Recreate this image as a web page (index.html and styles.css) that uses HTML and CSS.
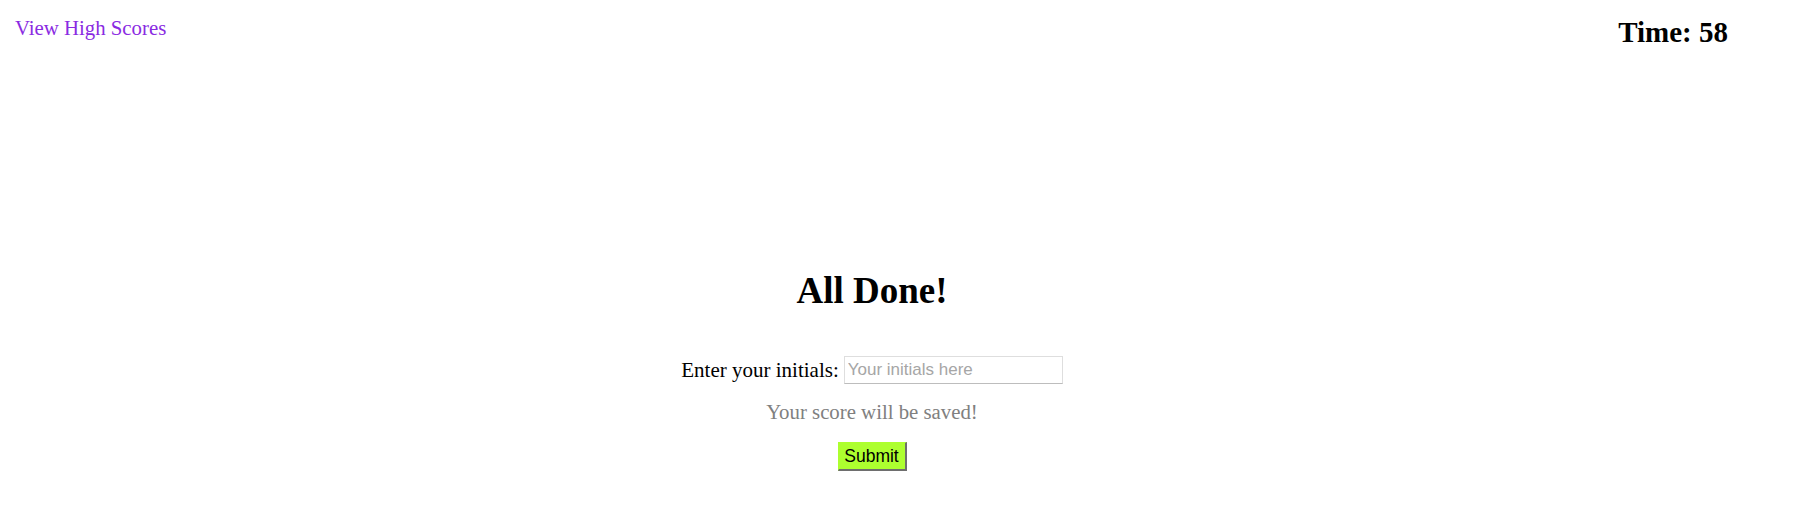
FILE: index.html
```html
<!DOCTYPE html>
<html lang="en">
<head>
<meta charset="utf-8">
<title>Quiz</title>
<link rel="stylesheet" href="styles.css">
</head>
<body>
<header class="top-bar">
  <a class="scores-link" href="#">View High Scores</a>
  <h2 class="timer">Time: 58</h2>
</header>
<main class="done">
  <h1 class="done-title">All Done!</h1>
  <div class="initials-row">
    <label class="initials-label" for="initials">Enter your initials:</label>
    <input class="initials-input" id="initials" type="text" placeholder="Your initials here">
  </div>
  <p class="save-note">Your score will be saved!</p>
  <button class="submit-btn" type="button">Submit</button>
</main>
</body>
</html>
```

FILE: styles.css
```css
html, body {
  margin: 0;
  padding: 0;
  background: #ffffff;
}

body {
  font-family: "Liberation Serif", "Times New Roman", serif;
  color: #000000;
}

.top-bar {
  display: flex;
  justify-content: space-between;
  align-items: flex-start;
  padding: 16px 85px 0 15px;
}

.scores-link {
  font-size: 20.8px;
  line-height: 24px;
  color: #8a2be2;
  text-decoration: none;
}

.timer {
  margin: 1px 0 0;
  font-size: 29px;
  line-height: 31px;
  font-weight: bold;
}

.done {
  display: flex;
  flex-direction: column;
  align-items: center;
  padding: 222px 69px 0 0;
}

.done-title {
  margin: 0;
  font-size: 37px;
  line-height: 42px;
  font-weight: bold;
}

.initials-row {
  display: flex;
  align-items: center;
  margin-top: 43px;
  height: 30px;
}

.initials-label {
  font-size: 21px;
  line-height: 30px;
  margin-right: 5px;
}

.initials-input {
  box-sizing: border-box;
  width: 219px;
  height: 28px;
  margin: 0;
  padding: 0 3px;
  font-family: "Liberation Sans", Arial, sans-serif;
  font-size: 17px;
  color: #000;
  background: #fff;
  border: 1px solid #dedede;
  border-bottom-color: #bdbdbd;
  border-radius: 0;
  outline: none;
}

.initials-input::placeholder {
  color: #a6a6a6;
}

.save-note {
  margin: 15px 0 0;
  font-size: 20.8px;
  line-height: 24px;
  color: #808080;
}

.submit-btn {
  box-sizing: border-box;
  margin-top: 18px;
  width: 69px;
  height: 29px;
  padding: 0;
  font-family: "Liberation Sans", Arial, sans-serif;
  font-size: 17.5px;
  color: #000;
  background: #adff2f;
  border-style: solid;
  border-width: 1px 2px 2px 1px;
  border-color: #adff2f #6e6e6e #6e6e6e #adff2f;
  border-radius: 0;
}
```
